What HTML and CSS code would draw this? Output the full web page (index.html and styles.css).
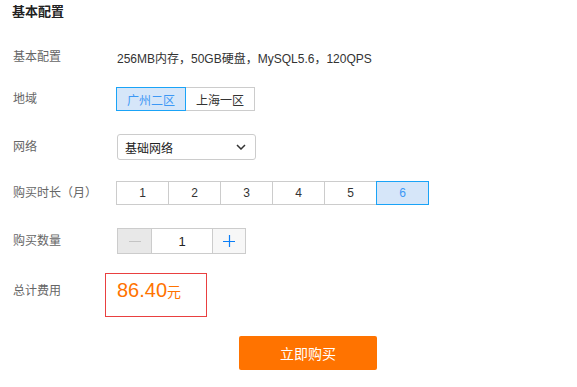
FILE: index.html
```html
<!DOCTYPE html>
<html>
<head>
    <title>基本配置</title>
    <link rel="stylesheet" href="styles.css">
</head>
<body>
    <div class="page">
        <h2 class="title">基本配置</h2>

        <div class="row row-spec">
            <div class="label">基本配置</div>
            <div class="value">256MB内存，50GB硬盘，MySQL5.6，120QPS</div>
        </div>

        <div class="row row-region">
            <div class="label">地域</div>
            <div class="seg">
                <button class="seg-btn region active">广州二区</button>
                <button class="seg-btn region">上海一区</button>
            </div>
        </div>

        <div class="row row-net">
            <div class="label">网络</div>
            <div class="select">
                <span>基础网络</span>
                <svg class="chev" width="10" height="6" viewBox="0 0 10 6">
                    <path d="M1 1 L5 5 L9 1" fill="none" stroke="#333" stroke-width="1.5"/>
                </svg>
            </div>
        </div>

        <div class="row row-dur">
            <div class="label">购买时长（月）</div>
            <div class="seg">
                <button class="seg-btn month">1</button>
                <button class="seg-btn month">2</button>
                <button class="seg-btn month">3</button>
                <button class="seg-btn month">4</button>
                <button class="seg-btn month">5</button>
                <button class="seg-btn month active">6</button>
            </div>
        </div>

        <div class="row row-qty">
            <div class="label">购买数量</div>
            <div class="stepper">
                <span class="step minus">
                    <svg width="12" height="12" viewBox="0 0 12 12"><path d="M0 6.5 H12" stroke="#c4c4c4" stroke-width="1"/></svg>
                </span>
                <span class="qty">1</span>
                <span class="step plus">
                    <svg width="12" height="12" viewBox="0 0 12 12"><path d="M0 6.5 H12 M6.5 0 V12" stroke="#0a7ef7" stroke-width="1.2"/></svg>
                </span>
            </div>
        </div>

        <div class="row row-total">
            <div class="label total-label">总计费用</div>
            <div class="total-box">
                <span class="price">86.40</span><span class="unit">元</span>
            </div>
        </div>

        <button class="buy">立即购买</button>
    </div>
</body>
</html>
```

FILE: styles.css
```css
body {
    margin: 0;
    font-family: "Liberation Sans", "Noto Sans CJK SC", sans-serif;
    font-size: 12px;
    color: #333;
    background: #fff;
}

.page {
    padding-left: 13px;
}

.title {
    margin: 0;
    font-size: 13px;
    font-weight: bold;
    line-height: 24px;
    color: #222;
    margin-left: -1px;
}

.row {
    display: flex;
    align-items: center;
}

.label {
    width: 104px;
    flex-shrink: 0;
    color: #666;
    line-height: 24px;
}

.total-label {
    padding-top: 6px;
}

.row-spec { margin-top: 21px; height: 24px; }
.row-region { margin-top: 18px; }
.row-net { margin-top: 23px; }
.row-dur { margin-top: 21px; }
.row-qty { margin-top: 23px; }
.row-total { margin-top: 19px; align-items: flex-start; }

.value {
    color: #333;
}

.seg {
    display: flex;
    margin-left: -1px;
}

.seg-btn {
    font-family: inherit;
    font-size: 12px;
    color: #333;
    background: #fff;
    border: 1px solid #ccc;
    margin-left: -1px;
    height: 24px;
    padding: 0;
    cursor: pointer;
}

.seg-btn:first-child {
    margin-left: 0;
}

.seg-btn.region {
    width: 70px;
}

.seg-btn.month {
    width: 53px;
}

.seg-btn.active {
    background: #d6e6f9;
    border-color: #1aa3f7;
    color: #3d98f5;
    position: relative;
}

.select {
    width: 139px;
    height: 26px;
    box-sizing: border-box;
    border: 1px solid #ccc;
    border-radius: 3px;
    display: flex;
    align-items: center;
    justify-content: space-between;
    padding: 0 9px 0 7px;
    color: #222;
}

.stepper {
    display: flex;
    height: 26px;
    box-sizing: border-box;
    border: 1px solid #ccc;
}

.step, .qty {
    display: flex;
    align-items: center;
    justify-content: center;
}

.minus {
    width: 33px;
    background: #e8e8e8;
    border-right: 1px solid #ccc;
}

.qty {
    width: 60px;
    border-right: 1px solid #ccc;
    color: #222;
    font-size: 13px;
}

.plus {
    width: 32px;
    background: #f7f7f7;
}

.total-box {
    margin-left: -12px;
    width: 102px;
    height: 44px;
    box-sizing: border-box;
    border: 1px solid #e94040;
    padding: 4px 0 0 11px;
    line-height: 24px;
    color: #ff7300;
}

.price {
    font-size: 20px;
}

.unit {
    font-size: 14px;
}

.buy {
    display: block;
    margin: 19px 0 0 226px;
    width: 138px;
    height: 34px;
    border: none;
    border-radius: 2px;
    background: #ff7300;
    color: #fff;
    font-family: inherit;
    font-size: 14px;
    cursor: pointer;
}
```
